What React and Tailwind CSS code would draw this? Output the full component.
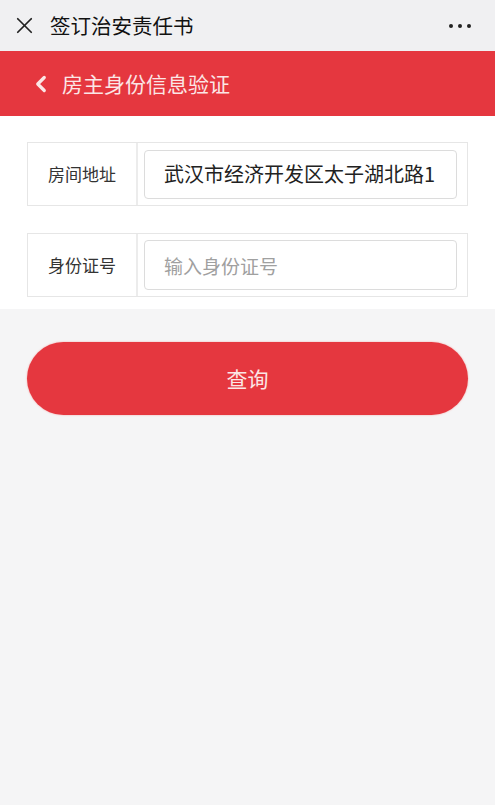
import React from 'react';
import { X, ChevronLeft } from 'lucide-react';

const font = { fontFamily: '"Noto Sans CJK SC", "Noto Sans", sans-serif' };

const Row = ({ label, children }) => (
  <div className="flex h-[64px] border border-[#e6e6e6]">
    <div className="w-[110px] shrink-0 flex items-center justify-center border-r-2 border-[#ececec] text-[17px] text-[#333]">
      {label}
    </div>
    <div className="flex-1 flex items-center pl-[6px] pr-[10px]">{children}</div>
  </div>
);

export default function App() {
  return (
    <div style={font} className="w-[495px] h-[805px] bg-[#f5f5f6] flex flex-col">
      <div className="h-[51px] bg-[#f0f0f2] flex items-center pl-[11px] pr-[24px]">
        <X className="w-[27px] h-[27px] text-[#222]" strokeWidth={1.5} />
        <span className="ml-[12px] text-[20.5px] text-[#111]">签订治安责任书</span>
        <span className="ml-auto flex gap-[5px]">
          <span className="w-[4px] h-[4px] rounded-full bg-[#222]" />
          <span className="w-[4px] h-[4px] rounded-full bg-[#222]" />
          <span className="w-[4px] h-[4px] rounded-full bg-[#222]" />
        </span>
      </div>
      <div className="h-[65px] bg-[#e5373f] flex items-center pl-[28px]">
        <ChevronLeft className="w-[26px] h-[26px] text-[#fbe6e6]" strokeWidth={3} />
        <span className="ml-[8px] text-[21px] text-[#fbe6e6]">房主身份信息验证</span>
      </div>
      <div className="bg-white pt-[26px] pb-[12px] px-[27px] flex flex-col gap-[27px]">
        <Row label="房间地址">
          <div className="w-full h-[49px] border border-[#dcdcdc] rounded-[4px] flex items-center pl-[19px] text-[20px] text-[#222] overflow-hidden whitespace-nowrap">
            武汉市经济开发区太子湖北路1
          </div>
        </Row>
        <Row label="身份证号">
          <input
            placeholder="输入身份证号"
            className="w-full h-[50px] border border-[#dcdcdc] rounded-[4px] pl-[19px] text-[19px] text-[#222] placeholder:text-[#a0a0a0] outline-none"
          />
        </Row>
      </div>
      <div className="px-[27px] pt-[33px]">
        <button className="w-full h-[73px] rounded-full bg-[#e5373f] text-[#fbe6e6] text-[21px] shadow-[0_0_2px_#f3a0a0]">
          查询
        </button>
      </div>
    </div>
  );
}
